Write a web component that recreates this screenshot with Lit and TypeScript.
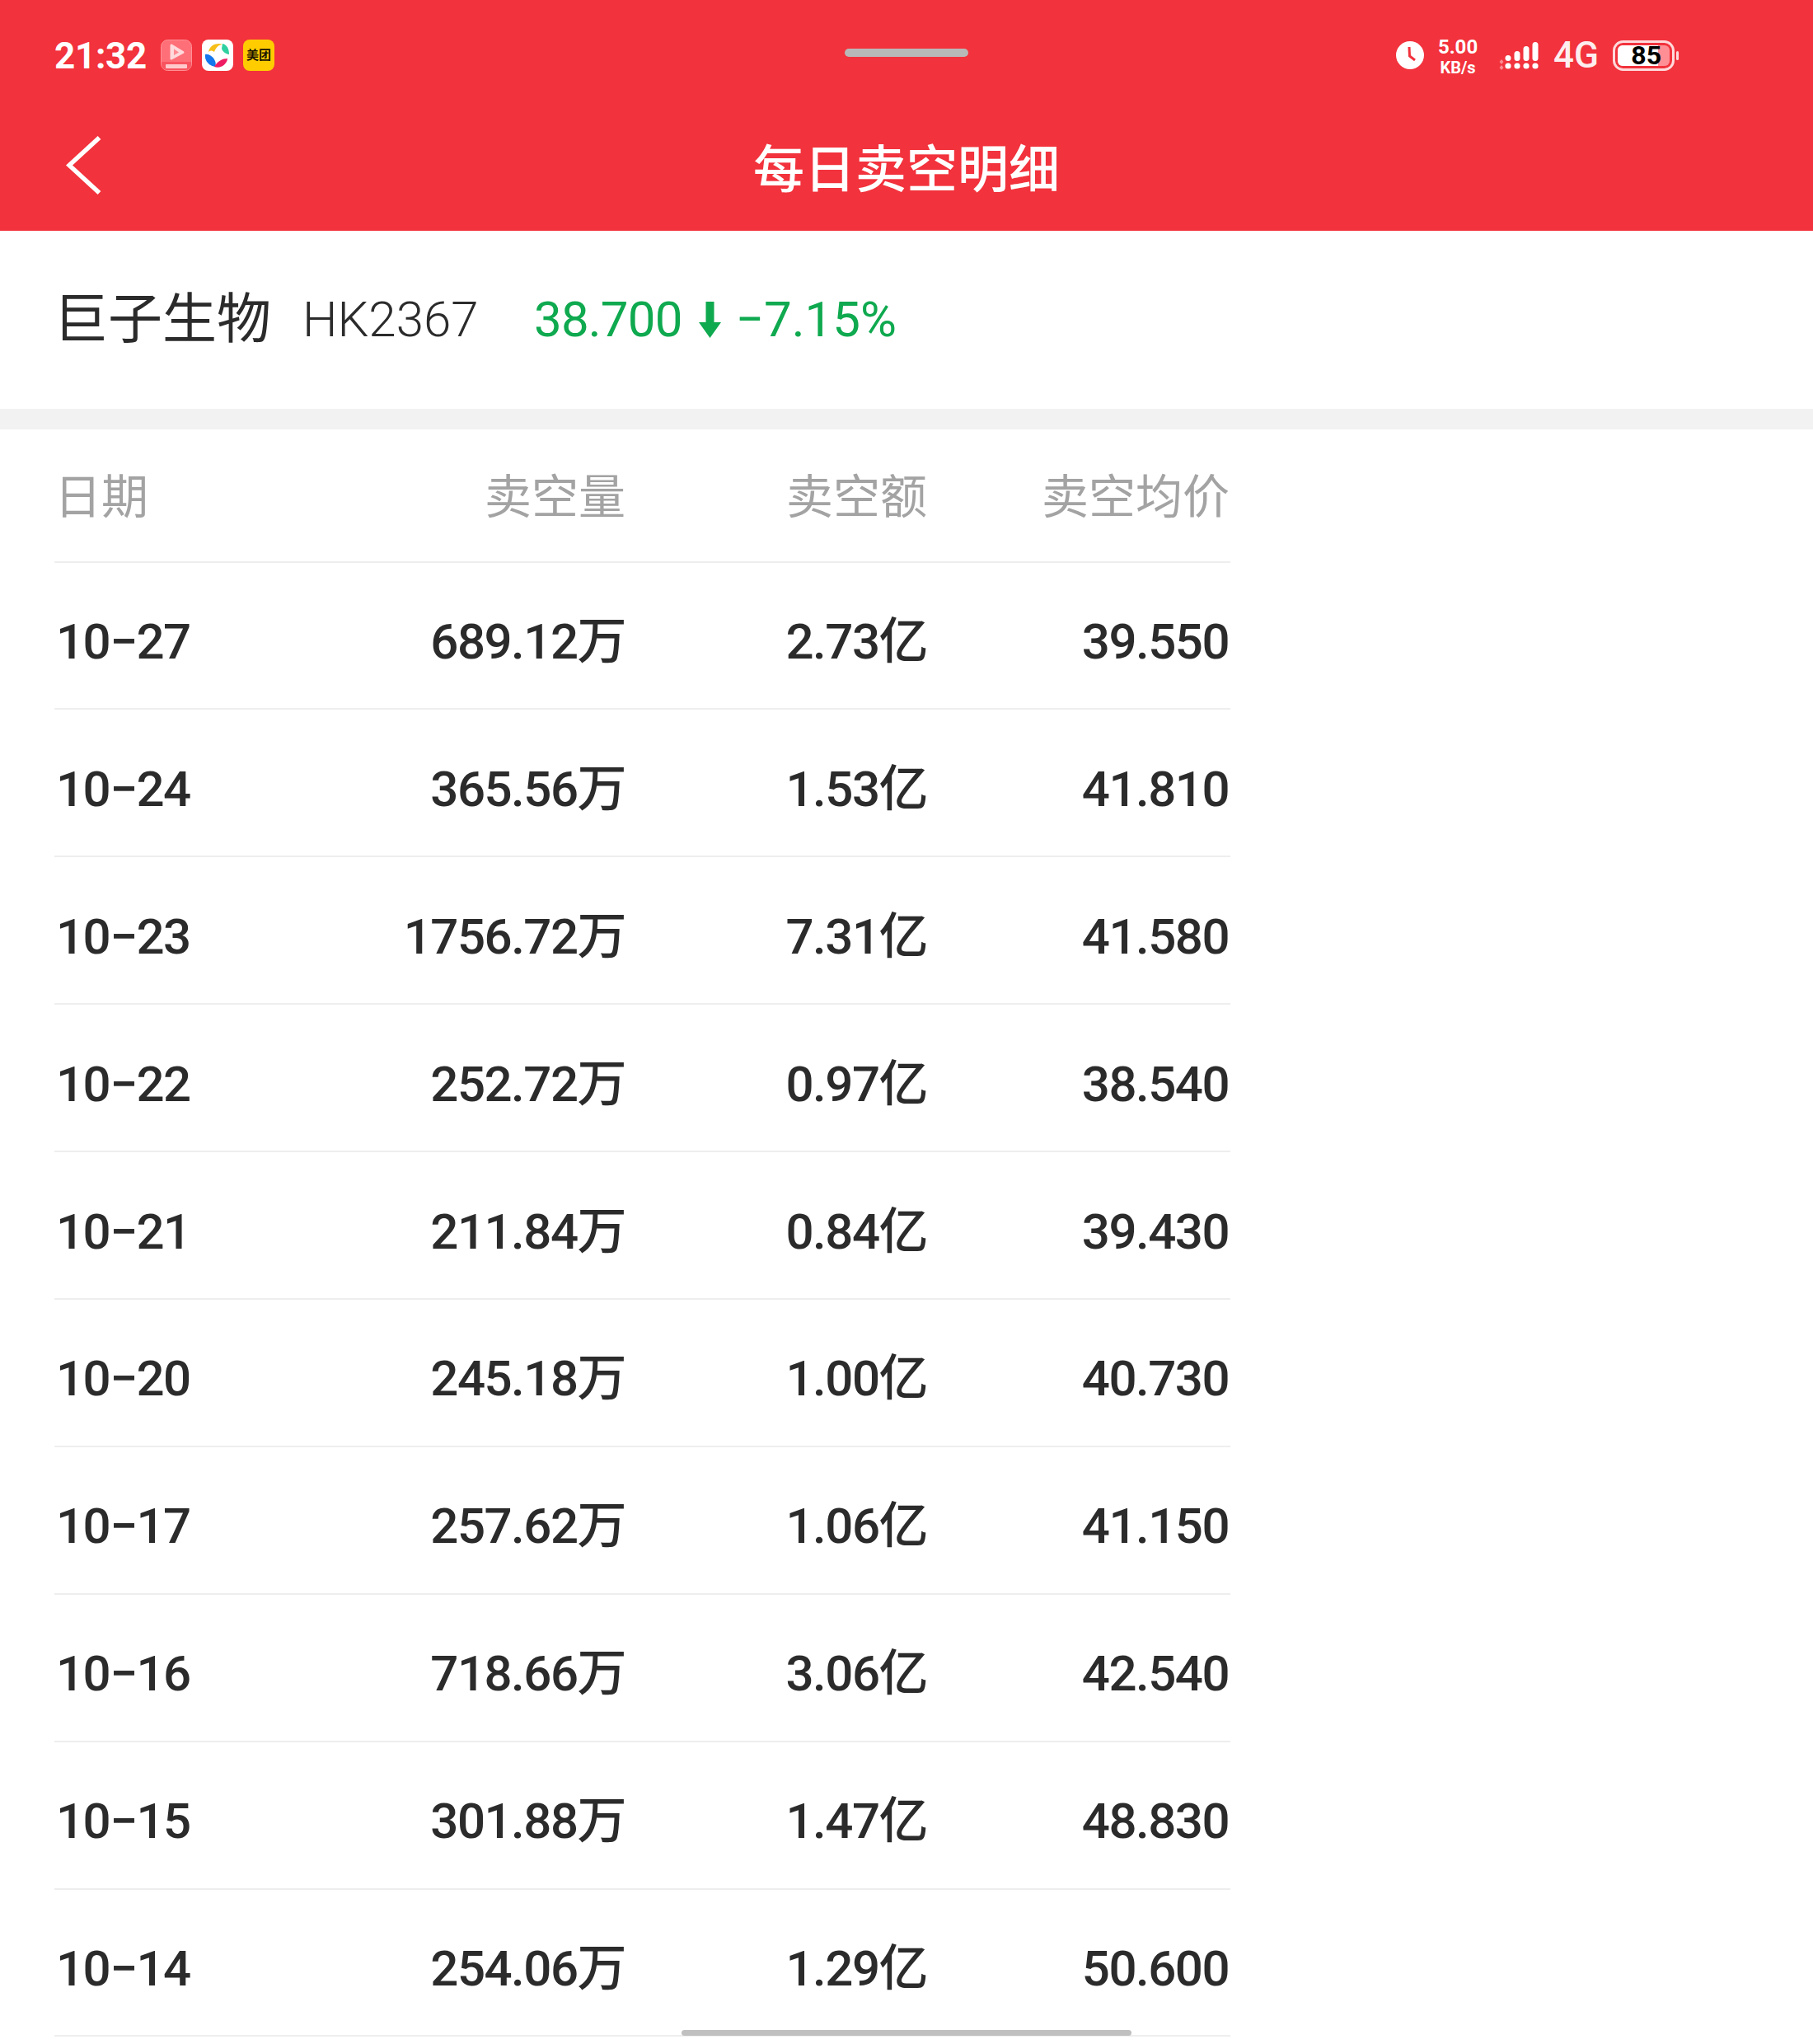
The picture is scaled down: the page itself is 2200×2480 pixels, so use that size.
import { LitElement, html, css } from 'lit';
import { customElement } from 'lit/decorators.js';

const ROWS = [
  ['10−27', '689.12万', '2.73亿', '39.550'],
  ['10−24', '365.56万', '1.53亿', '41.810'],
  ['10−23', '1756.72万', '7.31亿', '41.580'],
  ['10−22', '252.72万', '0.97亿', '38.540'],
  ['10−21', '211.84万', '0.84亿', '39.430'],
  ['10−20', '245.18万', '1.00亿', '40.730'],
  ['10−17', '257.62万', '1.06亿', '41.150'],
  ['10−16', '718.66万', '3.06亿', '42.540'],
  ['10−15', '301.88万', '1.47亿', '48.830'],
  ['10−14', '254.06万', '1.29亿', '50.600'],
];

@customElement('app-root')
export class AppRoot extends LitElement {
  static styles = css`
    :host {
      display: block;
      position: relative;
      height: 2480px;
      overflow: hidden;
      background: #fff;
      font-family: Roboto, "Noto Sans CJK SC", sans-serif;
      color: #2b2b2b;
    }

    .top {
      height: 280px;
      background: #f2323c;
      color: #fff;
    }
    .status {
      height: 134px;
      display: flex;
      align-items: center;
      justify-content: space-between;
      padding: 0 160px 0 66px;
      box-sizing: border-box;
    }
    .status-left, .status-right {
      display: flex;
      align-items: center;
    }
    .time {
      font-size: 44px;
      font-weight: 700;
      margin-right: 18px;
      width: 111px;
      letter-spacing: -0.3px;
      margin-top: 2px;
    }
    .notif {
      width: 38px;
      height: 38px;
      margin-right: 12px;
      display: block;
    }
    .meituan {
      width: 38px;
      height: 38px;
      border-radius: 8px;
      background: #ffcc00;
      color: #1a1400;
      font-size: 15px;
      font-weight: 700;
      display: flex;
      align-items: center;
      justify-content: center;
      line-height: 1;
    }
    .speed {
      width: 52px;
      margin: 2px 20px 0 15px;
      text-align: center;
      font-weight: 700;
      line-height: 1;
    }
    .speed div:first-child { font-size: 24px; margin-bottom: 3px; }
    .speed div:last-child { font-size: 20px; }
    .net {
      font-size: 44px;
      font-weight: 500;
      margin: 0 17px;
      line-height: 1;
      opacity: 0.92;
    }
    .battery {
      position: relative;
      width: 83px;
      height: 37px;
    }
    .battery svg { display: block; }
    .battery span {
      position: absolute;
      left: 0;
      top: 0;
      width: 59px;
      text-align: right;
      font-size: 32px;
      font-weight: 700;
      line-height: 37px;
      color: #000;
    }

    .nav {
      height: 146px;
      display: flex;
      align-items: center;
      justify-content: center;
      position: relative;
    }
    .back {
      position: absolute;
      left: 80px;
      top: 28px;
    }
    .title {
      font-size: 62px;
      font-weight: 500;
      margin-top: -13px;
    }

    .stock {
      height: 216px;
      display: flex;
      align-items: center;
      padding-left: 65px;
      line-height: 1;
    }
    .name {
      font-size: 66px;
      font-weight: 400;
      width: 302px;
    }
    .code {
      font-size: 60px;
      font-weight: 300;
      width: 281px;
    }
    .price {
      font-size: 60px;
      font-weight: 400;
      color: #0fa94f;
      display: flex;
      align-items: center;
      letter-spacing: -0.8px;
    }
    .price svg { margin: 0 18px 0 20px; }
    .price .pct { letter-spacing: 0; }

    .band {
      height: 25px;
      background: #f2f2f2;
    }

    .table {
      margin-left: 66px;
      width: 1427px;
    }
    .row {
      display: grid;
      grid-template-columns: 298px 393px 366px 366px;
      align-items: center;
      height: 178.9px;
      box-sizing: border-box;
      border-bottom: 2px solid #eeeeee;
      font-size: 60px;
      letter-spacing: -1.5px;
      padding: 16px 0 0 2px;
      line-height: 1;
      font-weight: 500;
    }
    .row > div:nth-child(n + 2) { text-align: right; }
    .row.head {
      grid-template-columns: 300px 393px 366px 367px;
      height: 161.5px;
      font-size: 57px;
      letter-spacing: 0;
      color: #a3a3a3;
      padding: 6px 0 0 0;
      font-weight: 400;
    }

    .pill {
      position: absolute;
      left: 1025px;
      top: 59px;
      width: 150px;
      height: 10px;
      border-radius: 5px;
      background: #b8b8b8;
    }
    .scrollbar {
      position: absolute;
      left: 827px;
      top: 2463px;
      width: 546px;
      height: 7px;
      border-radius: 4px;
      background: #c0c0c0;
    }
  `;

  render() {
    return html`
      <div class="top">
        <div class="status">
          <div class="status-left">
            <div class="time">21:32</div>
            <svg class="notif" viewBox="0 0 38 38">
              <rect x="0.500" y="0.500" width="37" height="37" rx="8" fill="#ff6f78" stroke="#ff8f95" />
              <path d="M1 27 H37 V30 a7 7 0 0 1 -7 7 H8 a7 7 0 0 1 -7 -7 Z" fill="#f8545f" />
              <path d="M13 7 L27 15.500 L13 23 Z" fill="#ffd9dc" stroke="#ffd9dc" stroke-width="3" stroke-linejoin="round" />
              <path d="M16 11.500 L22 15.500 L16 19 Z" fill="#ff8a91" />
              <rect x="6" y="30" width="26" height="5" rx="1" fill="#ffc9cc" />
            </svg>
            <svg class="notif" viewBox="0 0 38 38">
              <rect width="38" height="38" rx="8" fill="#fff" />
              <path d="M8 15 C9 8 17 3 25 6 C20 6 17 10 15 15 C12 13 10 13 8 15 Z" fill="#f7bf1a" />
              <path d="M25 5 C30 6 33 11 33 18 C30 18 25 15 24 11 Z" fill="#2fd0a0" />
              <path d="M4 18 C8 17 13 20 16 26 C17 29 17 31 16 33 C9 32 3 26 4 18 Z" fill="#1477ee" />
              <path d="M15 33 C19 26 25 23 31 23 C31 29 23 36 15 33 Z" fill="#ee1d63" />
            </svg>
            <div class="meituan">美团</div>
          </div>
          <div class="status-right">
            <svg width="34" height="34" viewBox="0 0 34 34">
              <circle cx="17" cy="17" r="17" fill="#fff" />
              <path d="M16 7 L16.500 18 L23 23" fill="none" stroke="#f2323c" stroke-width="3" />
            </svg>
            <div class="speed"><div>5.00</div><div>KB/s</div></div>
            <svg width="53" height="36" viewBox="0 0 53 36">
              <path d="M7 23 L9.500 26 L7 29 L4.500 26 Z M7 30 L9.500 33 L7 36 L4.500 33 Z" fill="#ff8a90" />
              <g fill="#fff">
                <circle cx="15" cy="31" r="3.600" /><circle cx="26" cy="31" r="3.600" />
                <circle cx="37" cy="31" r="3.600" /><circle cx="48" cy="31" r="3.600" />
                <rect x="11.500" y="18" width="7" height="7" rx="3.500" />
                <rect x="22.500" y="13" width="7" height="12" rx="3.500" />
                <rect x="33.500" y="7" width="7" height="18" rx="3.500" />
                <rect x="44.500" y="2" width="7" height="23" rx="3.500" />
              </g>
            </svg>
            <div class="net">4G</div>
            <div class="battery">
              <svg width="83" height="37" viewBox="0 0 83 37">
                <rect x="1.500" y="1.500" width="72" height="34" rx="11" fill="none" stroke="#ffd9db" stroke-width="3" />
                <rect x="6" y="6" width="63" height="25" rx="6" fill="#ff8f95" />
                <path d="M12 6 H55 V31 H12 a6 6 0 0 1 -6 -6 V12 a6 6 0 0 1 6 -6 Z" fill="#fff" />
                <rect x="77" y="13" width="3" height="11" rx="1.500" fill="#ffd9db" />
              </svg>
              <span>85</span>
            </div>
          </div>
        </div>
        <div class="nav">
          <svg class="back" width="44" height="76" viewBox="0 0 44 76">
            <path d="M40.500 5 L4 38.500 L40.500 72" fill="none" stroke="#fff" stroke-width="5.500" />
          </svg>
          <div class="title">每日卖空明细</div>
        </div>
      </div>

      <div class="stock">
        <div class="name">巨子生物</div>
        <div class="code">HK2367</div>
        <div class="price">
          <span>38.700</span>
          <svg width="27" height="44" viewBox="0 0 27 44">
            <path d="M8.500 0 H18.500 V25 H27 L13.500 44 L0 25 H8.500 Z" fill="#0fa94f" />
          </svg>
          <span class="pct">−7.15%</span>
        </div>
      </div>

      <div class="band"></div>

      <div class="table">
        <div class="row head">
          <div>日期</div><div>卖空量</div><div>卖空额</div><div>卖空均价</div>
        </div>
        ${ROWS.map(row => html`
          <div class="row">
            ${row.map(cell => html`<div>${cell}</div>`)}
          </div>
        `)}
      </div>

      <div class="pill"></div>
      <div class="scrollbar"></div>
    `;
  }
}
